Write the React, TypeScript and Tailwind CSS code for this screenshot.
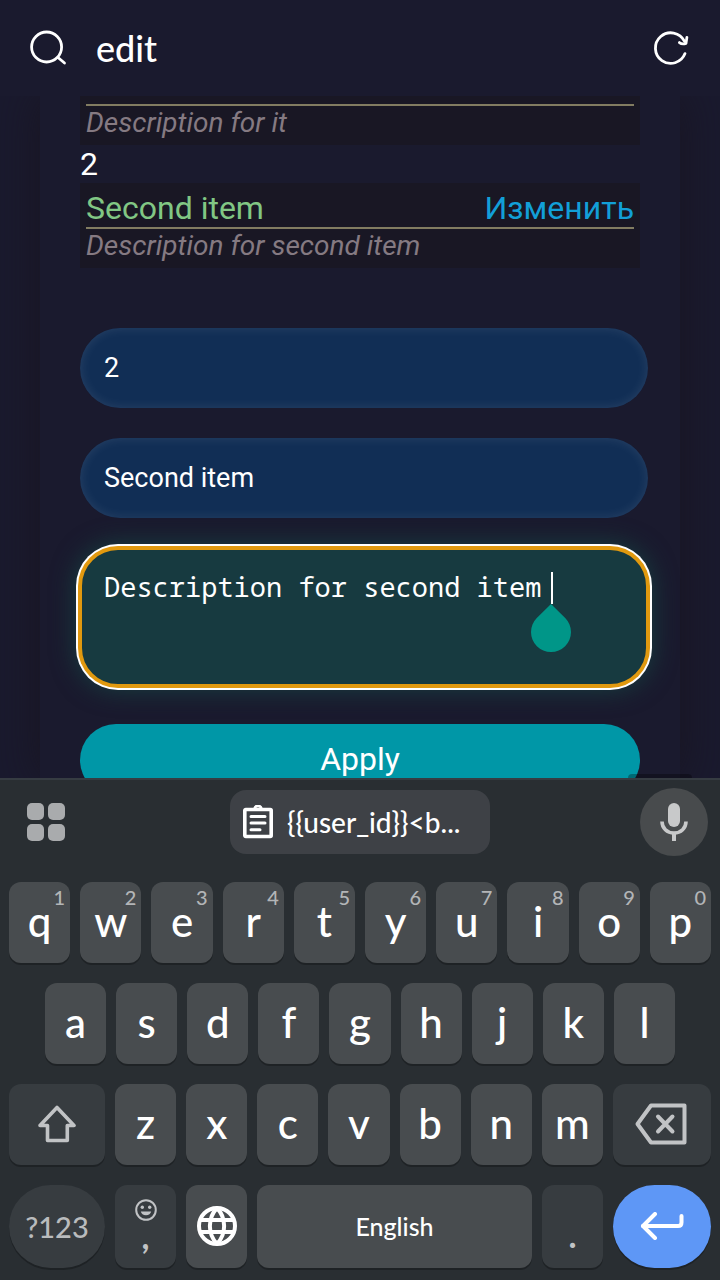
import { useState, type ReactNode } from "react";

type KeyDef = { label: string; hint?: string };

const topRow: KeyDef[] = "qwertyuiop".split("").map((label, i) => ({
  label,
  hint: String((i + 1) % 10),
}));
const homeRow: KeyDef[] = "asdfghjkl".split("").map((label) => ({ label }));
const bottomRow: KeyDef[] = "zxcvbnm".split("").map((label) => ({ label }));

const keyBase =
  "relative flex h-[81px] items-center justify-center rounded-xl shadow-[0_2px_0_#1e2225]";

function LetterKey({ label, hint }: KeyDef) {
  return (
    <button
      type="button"
      className={`${keyBase} min-w-0 flex-1 bg-[#484c4f] pb-1 text-[42px] leading-[42px] font-medium text-white`}
    >
      {label}
      {hint && (
        <span className="absolute top-[5px] right-[5px] text-[20px] leading-[20px] font-medium text-[#b3b5b7]">
          {hint}
        </span>
      )}
    </button>
  );
}

function SideKey({ name, className, children }: { name: string; className: string; children: ReactNode }) {
  return (
    <button type="button" aria-label={name} className={`${keyBase} shrink-0 ${className}`}>
      {children}
    </button>
  );
}

function Header() {
  const [query, setQuery] = useState("edit");
  return (
    <header className="flex h-24 shrink-0 items-center bg-[#1a1a2e] px-7">
      <label htmlFor="search" aria-label="Search">
        <svg width="40" height="40" viewBox="0 0 40 40" fill="none" stroke="#fff" strokeWidth="2.8" strokeLinecap="round">
          <circle cx="18.6" cy="19" r="15" />
          <path d="M30 29.5 36.5 35" />
        </svg>
      </label>
      <input
        id="search"
        type="text"
        value={query}
        onChange={(e) => setQuery(e.target.value)}
        className="ml-7 min-w-0 flex-1 bg-transparent font-['Lato',sans-serif] text-[36px] leading-[48px] font-medium text-white outline-none"
      />
      <button type="button" aria-label="Reload" className="shrink-0">
        <svg width="40" height="40" viewBox="0 0 40 40" fill="none" stroke="#fff" strokeWidth="2.8" strokeLinecap="round" strokeLinejoin="round">
          <path d="M33 25.6A15.3 15.3 0 1 1 32.4 13.2" />
          <path d="M34.9 9.4 34 15.4Q30 16.6 27.4 14.6" />
        </svg>
      </button>
    </header>
  );
}

const fieldClass =
  "-mr-2 block h-20 w-[calc(100%+8px)] rounded-full bg-[#112e55] px-6 text-[27px] text-white shadow-[inset_0_0_12px_rgba(255,255,255,0.1)] outline-none";

function EditForm() {
  return (
    <form className="mt-[60px] flex flex-col" onSubmit={(e) => e.preventDefault()}>
      <input aria-label="Number" type="text" defaultValue="2" className={fieldClass} />
      <input aria-label="Title" type="text" defaultValue="Second item" className={`mt-[30px] ${fieldClass}`} />
      <div className="relative mt-[30px] -mr-2">
        <textarea
          aria-label="Description"
          defaultValue="Description for second item "
          className="block h-[138px] w-full resize-none rounded-[38px] border-2 border-[#e1990f] bg-[#173a40] px-[22px] py-[22px] font-['Noto_Sans_Mono','DejaVu_Sans_Mono',monospace] text-[27px] leading-[30px] text-white shadow-[0_0_0_2px_#e1990f,0_0_0_4px_#fff,0_0_24px_4px_#173f40] outline-none"
        />
        <span className="absolute top-6 left-[471px] h-8 w-[2px] bg-white" />
        <svg className="absolute top-14 left-[451px]" width="40" height="48" viewBox="0 0 40 48" fill="#009688">
          <path d="M20 0 34.2 13.9A20 20 0 1 1 5.8 13.9Z" />
        </svg>
      </div>
      <button type="submit" className="mt-[38px] h-[72px] rounded-full bg-[#0097a7] pb-[2px] text-[32px] text-white">
        Apply
      </button>
    </form>
  );
}

function Content() {
  return (
    <main className="min-h-0 flex-1 overflow-hidden px-10">
      <section className="h-full bg-[#1a1a2e] px-10 font-['Roboto',sans-serif] shadow-[0_0_40px_#191521]">
        <div className="bg-[#191724] px-[6px] pt-2 pb-[6px]">
          <p className="border-t-2 border-[#827c61] text-[28px] leading-[33px] text-[#857a82] italic">
            Description for it
          </p>
        </div>
        <p className="pt-px text-[32px] leading-[37px] text-white">2</p>
        <div className="bg-[#191724] p-[6px]">
          <div className="flex justify-between border-b-2 border-[#827c61] text-[32px] leading-[38px]">
            <h2 className="text-[#81c784]">Second item</h2>
            <a href="#edit" className="text-[#129fd8]">
              Изменить
            </a>
          </div>
          <p className="text-[28px] leading-[33px] text-[#857a82] italic">Description for second item</p>
        </div>
        <EditForm />
      </section>
    </main>
  );
}

function Keyboard() {
  return (
    <div className="relative shrink-0 border-t-2 border-[#363c42] bg-[#292e32] pt-2 pb-3 font-['Lato',sans-serif]">
      <span className="absolute -top-[6px] right-7 h-1 w-16 rounded-t-full bg-black/30" />
      <div className="flex items-center justify-between px-3">
        <button type="button" aria-label="Keyboard menu" className="flex size-[68px] items-center justify-center">
          <svg width="38" height="38" viewBox="0 0 38 38" fill="#a9abad">
            <rect width="17" height="17" rx="5" />
            <rect x="21" width="17" height="17" rx="5" />
            <rect y="21" width="17" height="17" rx="5" />
            <rect x="21" y="21" width="17" height="17" rx="5" />
          </svg>
        </button>
        <button
          type="button"
          className="flex h-16 w-[260px] items-center gap-[14px] rounded-2xl bg-[#3e4146] pl-[13px] text-[28px] font-medium whitespace-nowrap text-white"
        >
          <svg width="30" height="34" viewBox="0 0 30 34" fill="none" stroke="#fff" strokeLinecap="round" strokeLinejoin="round">
            <rect x="1.8" y="4.500" width="26.400" height="27" rx="1" strokeWidth="3.600" />
            <path d="M11.5 3.500a3.6 3.4 0 0 1 7 0" strokeWidth="2.600" />
            <path d="M8 11.5h14M8 18h14M8 24.8h9" strokeWidth="3" />
          </svg>
          {"{{user_id}}<b..."}
        </button>
        <button type="button" aria-label="Voice input" className="flex size-[68px] items-center justify-center rounded-full bg-[#484b4d]">
          <svg width="28" height="38" viewBox="0 0 28 38" fill="none" stroke="#c8c9ca">
            <rect x="8" width="12" height="24" rx="6" fill="#c8c9ca" stroke="none" />
            <path d="M2 18.5C2 25 7 30 14 30s12-5 12-11.500" strokeWidth="3.600" />
            <path d="M14 30v8" strokeWidth="4" />
          </svg>
        </button>
      </div>

      <div className="mt-[26px] flex flex-col gap-5 px-[9px]">
        <div className="flex gap-[10px]">
          {topRow.map((k) => (
            <LetterKey key={k.label} {...k} />
          ))}
        </div>
        <div className="flex gap-[10px] px-9">
          {homeRow.map((k) => (
            <LetterKey key={k.label} {...k} />
          ))}
        </div>
        <div className="flex gap-[10px]">
          <SideKey name="Shift" className="w-24 bg-[#373c40] pb-[2px]">
            <svg width="40" height="38" viewBox="0 0 40 38" fill="none" stroke="#c1c3c5" strokeWidth="3.6" strokeLinejoin="round">
              <path d="M20 2.500 37 20.500H30.300V35.500H10.500V20.500H3Z" />
            </svg>
          </SideKey>
          {bottomRow.map((k) => (
            <LetterKey key={k.label} {...k} />
          ))}
          <SideKey name="Backspace" className="w-[98px] bg-[#373c40] pr-[2px] pb-[2px]">
            <svg width="52" height="42" viewBox="0 0 52 42" fill="none" stroke="#c1c3c5" strokeWidth="4" strokeLinecap="round" strokeLinejoin="round">
              <path d="M16 2.500H49.500V39.500H16L2.500 21Z" />
              <path d="M23 13.500 37.500 28.500M37.500 13.500 23 28.500" strokeWidth="4" />
            </svg>
          </SideKey>
        </div>
        <div className="flex gap-[10px]">
          <button
            type="button"
            className="flex h-[83px] w-24 shrink-0 items-center justify-center rounded-full bg-[#373c40] text-[29px] font-medium text-[#b9bbbd] shadow-[0_2px_0_#1e2225]"
          >
            ?123
          </button>
          <button
            type="button"
            className="flex h-[83px] w-[61px] shrink-0 flex-col items-center rounded-xl bg-[#373c40] pt-[14px] text-[34px] leading-[30px] font-bold text-[#c1c3c5] shadow-[0_2px_0_#1e2225]"
          >
            <svg className="shrink-0" width="22" height="22" viewBox="0 0 22 22" fill="none" stroke="#c1c3c5" strokeWidth="2">
              <circle cx="11" cy="11" r="9.800" />
              <circle cx="7.300" cy="8.300" r="1.700" fill="#c1c3c5" stroke="none" />
              <circle cx="14.700" cy="8.300" r="1.700" fill="#c1c3c5" stroke="none" />
              <path d="M5.800 12.500h10.400a5.300 4.500 0 0 1-10.400 0Z" fill="#c1c3c5" stroke="none" />
            </svg>
            ,
          </button>
          <button
            type="button"
            aria-label="Switch language"
            className="flex h-[83px] w-[61px] shrink-0 items-center justify-center rounded-xl bg-[#484c4f] pb-[2px] shadow-[0_2px_0_#1e2225]"
          >
            <svg width="40" height="40" viewBox="0 0 40 40" fill="none" stroke="#fff" strokeWidth="4">
              <circle cx="20" cy="20" r="18" />
              <path d="M3 14h34M3 26h34" />
              <path d="M20 2C10.500 12 10.500 28 20 38M20 2C29.500 12 29.500 28 20 38" />
            </svg>
          </button>
          <button
            type="button"
            className="flex h-[83px] min-w-0 flex-1 items-center justify-center rounded-xl bg-[#484c4f] text-[25px] font-medium text-white shadow-[0_2px_0_#1e2225]"
          >
            English
          </button>
          <button
            type="button"
            className="flex h-[83px] w-[61px] shrink-0 items-end justify-center rounded-xl bg-[#373c40] pb-4 text-[34px] leading-[34px] font-bold text-[#c1c3c5] shadow-[0_2px_0_#1e2225]"
          >
            .
          </button>
          <button
            type="button"
            aria-label="Enter"
            className="flex h-[83px] w-[98px] shrink-0 items-center justify-center rounded-full bg-[#5e97f6] pb-[2px] shadow-[0_2px_0_#1e2225]"
          >
            <svg width="44" height="28" viewBox="0 0 44 28" fill="none" stroke="#fff" strokeWidth="4" strokeLinecap="round" strokeLinejoin="round">
              <path d="M15 2 3 14 15 26" />
              <path d="M3 14H38Q41.500 14 41.500 10.500V4" />
            </svg>
          </button>
        </div>
      </div>
    </div>
  );
}

export default function App() {
  return (
    <div className="flex h-screen flex-col overflow-hidden bg-[#1a1a2e]">
      <Header />
      <Content />
      <Keyboard />
    </div>
  );
}
